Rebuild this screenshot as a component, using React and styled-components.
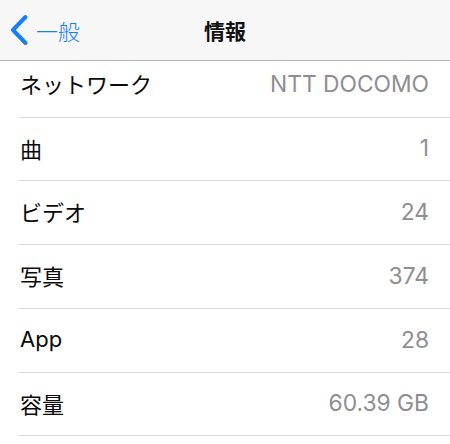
import React from "react";
import styled, { createGlobalStyle } from "styled-components";

const Global = createGlobalStyle`
  html, body { margin: 0; padding: 0; background: #ffffff; }
  body { font-family: Inter, "Noto Sans CJK JP", sans-serif; -webkit-font-smoothing: antialiased; }
`;

const Page = styled.div`
  width: 450px;
  height: 444px;
  overflow: hidden;
  background: #ffffff;
`;

const NavBar = styled.header`
  height: 60px;
  background: #f7f7f8;
  border-bottom: 1px solid #b4b4b6;
  display: grid;
  grid-template-columns: 1fr auto 1fr;
  align-items: center;
`;

const Back = styled.div`
  display: flex;
  align-items: center;
  gap: 7px;
  padding-left: 9px;
  color: #157efb;
  font-family: "Noto Sans CJK JP", sans-serif;
  font-size: 22px;
  font-weight: 300;
`;

const Title = styled.div`
  font-family: "Noto Sans CJK JP", sans-serif;
  font-size: 21px;
  font-weight: 700;
  color: #111;
`;

const List = styled.div`
  display: flex;
  flex-direction: column;
`;

const Row = styled.div`
  height: ${(p) => p.$h}px;
  padding-bottom: ${(p) => p.$pb}px;
  box-sizing: border-box;
  margin-left: 19px;
  padding-right: 21px;
  padding-left: 1px;
  display: flex;
  align-items: center;
  justify-content: space-between;
  border-bottom: 1px solid #dcdcde;
`;

const Label = styled.span`
  font-family: Inter, "Noto Sans CJK JP", sans-serif;
  font-size: 22px;
  font-weight: 400;
  color: #0a0a0a;
`;

const Value = styled.span`
  font-family: Inter, sans-serif;
  font-size: 22.8px;
  font-weight: 400;
  color: #8e8e92;
`;

const rows = [
  ["ネットワーク", "NTT DOCOMO", 57, 12],
  ["曲", "1", 63, 3],
  ["ビデオ", "24", 64, 3],
  ["写真", "374", 64, 3],
  ["App", "28", 64, 3],
  ["容量", "60.39 GB", 63, 3],
];

export default function App() {
  return (
    <Page>
      <Global />
      <NavBar>
        <Back>
          <svg width="20" height="32" viewBox="0 0 20 32">
            <path d="M16.5 3 L4 16 L16.5 29" fill="none" stroke="#157efb" strokeWidth="4" strokeLinecap="round" strokeLinejoin="round" />
          </svg>
          一般
        </Back>
        <Title>情報</Title>
        <div />
      </NavBar>
      <List>
        {rows.map(([l, v, h, pb]) => (
          <Row key={l} $h={h} $pb={pb}>
            <Label>{l}</Label>
            <Value>{v}</Value>
          </Row>
        ))}
      </List>
    </Page>
  );
}
